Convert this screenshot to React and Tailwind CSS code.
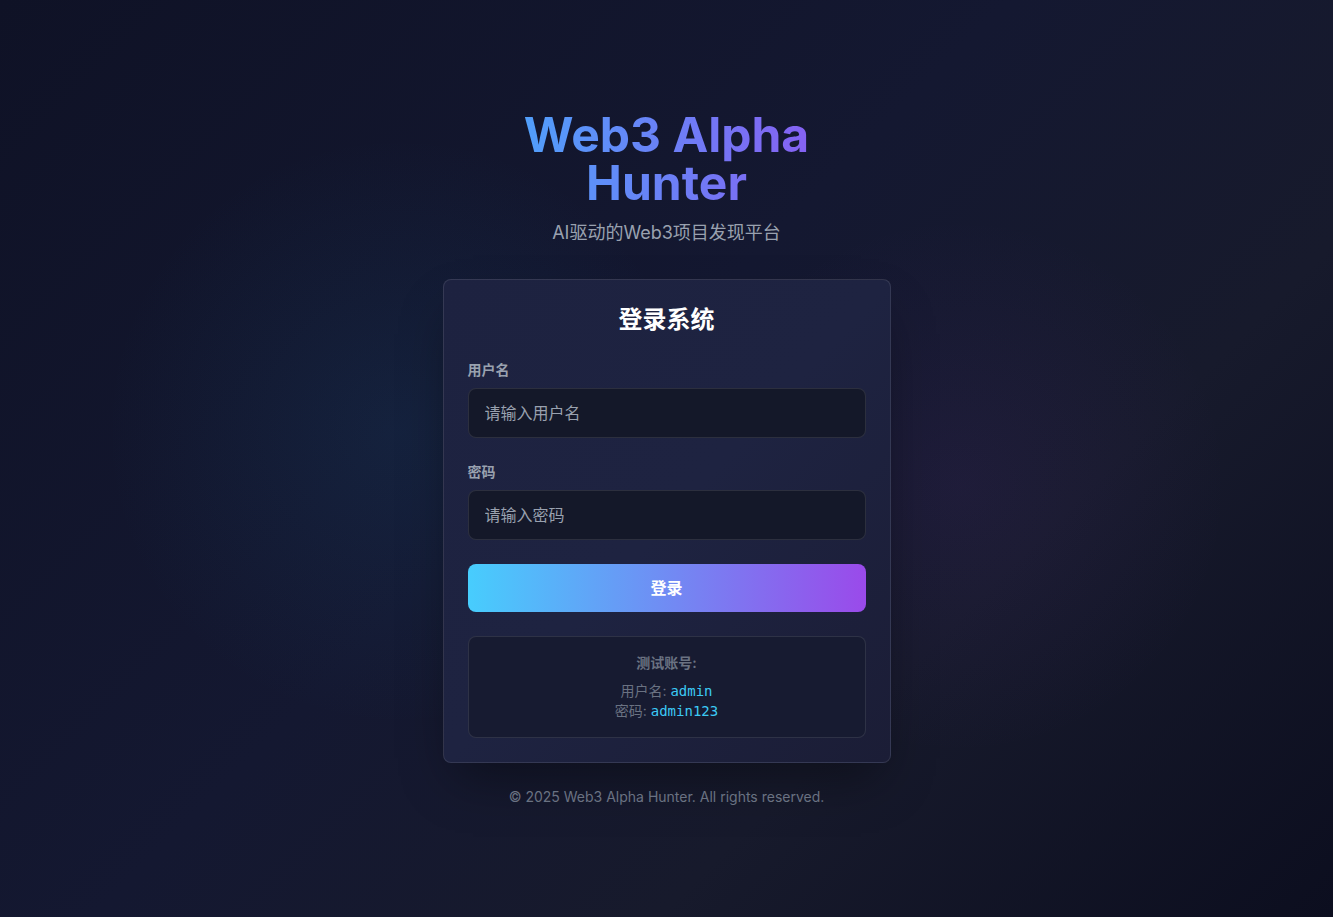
import { useState } from "react";

function Field({ label, type = "text", placeholder, value, onChange }) {
    return (
        <div className="mb-6">
            <label className="block text-sm font-semibold text-gray-400 mb-2">{label}</label>
            <input
                type={type}
                value={value}
                onChange={onChange}
                placeholder={placeholder}
                className="w-full px-4 py-3 text-base leading-6 rounded-lg bg-[#141829] border border-white/10 text-gray-200 placeholder:text-gray-400 outline-none focus:border-sky-400/50"
            />
        </div>
    );
}

export default function App() {
    const [username, setUsername] = useState("");
    const [password, setPassword] = useState("");

    return (
        <div
            className="min-h-screen flex items-center justify-center text-white bg-[radial-gradient(circle_at_30%_47%,rgba(34,130,190,0.10),transparent_28%),radial-gradient(circle_at_72%_53%,rgba(130,60,200,0.08),transparent_25%),linear-gradient(135deg,#0f1226_0%,#141831_45%,#171a2c_70%,#0c0e1f_100%)]"
            style={{ fontFamily: "Inter, 'Noto Sans CJK SC', sans-serif" }}
        >
            <div className="w-full max-w-md flex flex-col items-center">
                {/* Brand */}
                <h1 className="w-full text-5xl leading-none font-bold text-center bg-[linear-gradient(90deg,#42b0fd,#9450f0)] bg-clip-text text-transparent">
                    Web3 Alpha Hunter
                </h1>
                <p className="mt-3 text-lg text-gray-400">AI驱动的Web3项目发现平台</p>

                {/* Login card */}
                <div className="mt-8 w-full rounded-lg border border-white/10 bg-gradient-to-br from-[#1d2240] via-[#1e2341] to-[#1b1d36] p-6 shadow-2xl shadow-black/40">
                    <h2 className="text-2xl font-bold text-center mb-6">登录系统</h2>

                    <Field
                        label="用户名"
                        placeholder="请输入用户名"
                        value={username}
                        onChange={(e) => setUsername(e.target.value)}
                    />
                    <Field
                        label="密码"
                        type="password"
                        placeholder="请输入密码"
                        value={password}
                        onChange={(e) => setPassword(e.target.value)}
                    />

                    <button className="w-full py-3 text-base leading-6 font-bold rounded-lg text-white bg-[linear-gradient(90deg,#47cdfd,#9a4aea)]">
                        登录
                    </button>

                    {/* Demo credentials */}
                    <div className="mt-6 rounded-lg border border-white/10 bg-[#171b31] p-4 text-center text-sm text-gray-500">
                        <div className="font-semibold mb-2">测试账号:</div>
                        <div>
                            用户名: <code className="text-[#3ccaf5]" style={{ fontFamily: "'DejaVu Sans Mono', monospace" }}>admin</code>
                        </div>
                        <div>
                            密码: <code className="text-[#3ccaf5]" style={{ fontFamily: "'DejaVu Sans Mono', monospace" }}>admin123</code>
                        </div>
                    </div>
                </div>

                <p className="mt-6 text-sm text-gray-500">© 2025 Web3 Alpha Hunter. All rights reserved.</p>
            </div>
        </div>
    );
}
